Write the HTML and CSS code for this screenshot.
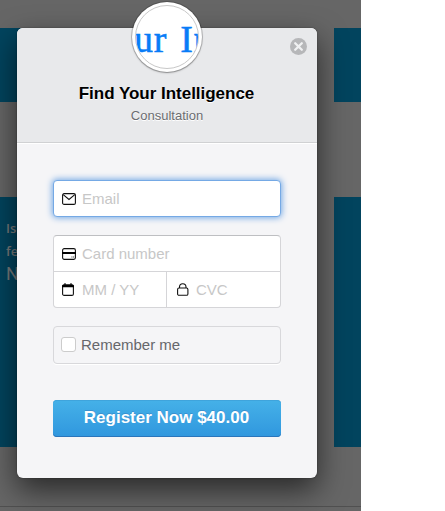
FILE: index.html
```
<!DOCTYPE html>
<html lang="en">
<head>
<meta charset="utf-8">
<title>Find Your Intelligence</title>
<link rel="stylesheet" href="styles.css">
</head>
<body>
<div class="page">
  <div class="backdrop">
    <div class="band band-top"><div class="panel"></div><div class="panel"></div></div>
    <div class="band band-main">
      <div class="panel copy"><p>Is</p><p>fe</p><p class="large">N</p></div>
      <div class="panel"></div>
    </div>
    <div class="rule"></div>
  </div>
  <main class="modal">
    <div class="logo"><div class="logo-image"><span>ur In</span></div></div>
    <button class="close" aria-label="Close"><svg width="17" height="17" viewBox="0 0 17 17"><circle cx="8.5" cy="8.5" r="8.5" fill="#b6b7b9"/><path d="M5.2 5.2l6.6 6.6M11.8 5.2l-6.6 6.6" stroke="#f0f1f2" stroke-width="2.3" stroke-linecap="round"/></svg></button>
    <header class="header">
      <h1>Find Your Intelligence</h1>
      <h2>Consultation</h2>
    </header>
    <form class="form">
      <div class="field email">
        <svg width="14" height="12" viewBox="0 0 14 12" fill="none" stroke="#111"><rect x=".6" y=".6" width="12.8" height="10.8" rx="1.5" stroke-width="1.1"/><path d="M1.2 1.7L7 6.5l5.8-4.8" stroke-width="1.1"/></svg>
        <span>Email</span>
      </div>
      <div class="card">
        <div class="field">
          <svg width="14" height="12" viewBox="0 0 14 12"><rect x=".6" y=".6" width="12.8" height="10.8" rx="1.6" fill="none" stroke="#111" stroke-width="1.1"/><path d="M0 4h14v2H0z"/><path d="M9.5 9h.9M11.2 9h.9" stroke="#222"/></svg>
          <span>Card number</span>
        </div>
        <div class="split">
          <div class="field">
            <svg class="calendar" width="12" height="13" viewBox="0 0 12 13"><rect x=".6" y="2.1" width="10.8" height="10.3" rx="1.5" fill="none" stroke="#111" stroke-width="1.1"/><path d="M0 3q0-1.5 1.5-1.5h9Q12 1.5 12 3v1.3H0zM2.5 0h1v2h-1zM8.5 0h1v2h-1z"/></svg>
            <span>MM / YY</span>
          </div>
          <div class="field cvc">
            <svg class="lock" width="12" height="13" viewBox="0 0 12 13" fill="none" stroke="#111" stroke-width="1.1"><rect x=".6" y="5" width="10.3" height="7.3" rx="1.4"/><path d="M2.5 5V4a3.25 3.25 0 0 1 6.5 0v1"/></svg>
            <span>CVC</span>
          </div>
        </div>
      </div>
      <div class="remember"><i class="checkbox"></i><span>Remember me</span></div>
      <button class="submit" type="button">Register Now $40.00</button>
    </form>
  </main>
</div>
</body>
</html>
```
FILE: styles.css
```
* { box-sizing: border-box; }
body { margin: 0; background: #fff; font-family: "Liberation Sans", Arial, sans-serif; }
.page { position: relative; width: 361px; height: 511px; overflow: hidden; background: #666; }
.backdrop { height: 511px; padding-top: 28px; }
.band { display: grid; grid-template-columns: 300px 27px; justify-content: space-between; }
.band-top { height: 74px; }
.band-main { height: 250px; margin-top: 95px; }
.panel { background: #02445e; }
.copy { padding: 20px 0 0 6px; color: #777b7c; font: 600 13px/23px "Open Sans", sans-serif; }
.copy p { margin: 0; }
.copy .large { font: 18px/21px Roboto, sans-serif; }
.rule { height: 1px; margin-top: 59px; background: #505050; }
.modal { position: absolute; left: 17px; top: 28px; width: 300px; height: 450px; border-radius: 6px; background: #f5f5f7; box-shadow: 0 12px 30px rgba(0,0,0,.6), 0 0 2px rgba(0,0,0,.4); }
.logo { position: absolute; left: 115px; top: -26px; width: 70px; height: 70px; padding: 3px; border-radius: 50%; background: #fff; box-shadow: 0 0 0 1px rgba(0,0,0,.18), 0 1px 2px rgba(0,0,0,.3); }
.logo-image { width: 64px; height: 64px; border: 1px solid #c8c8c8; border-radius: 50%; overflow: hidden; white-space: nowrap; color: #087cf7; font: 38px/66px "Liberation Serif", serif; -webkit-text-stroke: .5px #087cf7; }
.logo-image span { margin-left: -2px; letter-spacing: .7px; word-spacing: 3px; }
.close { position: absolute; right: 10px; top: 10px; width: 17px; height: 17px; padding: 0; border: 0; background: none; }
.close svg { display: block; }
.header { height: 115px; padding-top: 55px; border-bottom: 1px solid #d0d1d3; border-radius: 6px 6px 0 0; background: #e8e9eb; text-align: center; text-shadow: 0 1px 0 #fff; }
h1 { margin: 0 1px 0 0; color: #000; font-size: 17px; line-height: 21px; letter-spacing: -.02px; white-space: nowrap; }
h2 { margin: 2px 0 0; color: #6b6c70; font-size: 13px; line-height: 19px; font-weight: 400; }
.form { padding: 36px 36px 0; border-top: 1px solid #fff; }
.field { display: flex; align-items: center; height: 36px; padding-left: 9px; color: #c7c7c7; font-size: 15px; }
.field svg { flex: none; width: 14px; margin-right: 6px; }
.field .calendar { width: 12px; margin-right: 8px; }
.field .lock { width: 12px; margin-right: 7px; }
.email { height: 37px; padding-left: 8px; border: 1px solid #75a9e5; border-radius: 4px; background: #fff; box-shadow: 0 0 6px 1px #75a9e5; }
.card { height: 73px; margin-top: 18px; border: 1px solid #d5d5d8; border-top-color: #bebfc2; border-radius: 4px; background: #fff; }
.card .field { height: 35px; padding-left: 8px; }
.split { display: grid; grid-template-columns: 112px 1fr; border-top: 1px solid #d5d5d8; }
.card .cvc { padding-left: 10px; border-left: 1px solid #d5d5d8; }
.remember { display: flex; align-items: center; height: 38px; margin-top: 18px; padding: 0 0 1px 7px; border: 1px solid #d8d8db; border-radius: 4px; color: #66676b; font-size: 15px; box-shadow: 0 1px 0 #fff; }
.checkbox { width: 15px; height: 15px; margin-right: 5px; border: 1px solid #ccc; border-radius: 3px; background: #fff; }
.submit { display: block; width: 228px; height: 37px; margin-top: 36px; padding: 0 1px 2px 0; border: 0; border-radius: 4px; background: linear-gradient(#45b1e8, #3097de); box-shadow: inset 0 -1px #2a75bb, inset 0 1px #3fa4dc; color: #fff; font: bold 17px "Liberation Sans", Arial, sans-serif; text-shadow: 0 -1px 0 rgba(46,86,153,.3); }
```
